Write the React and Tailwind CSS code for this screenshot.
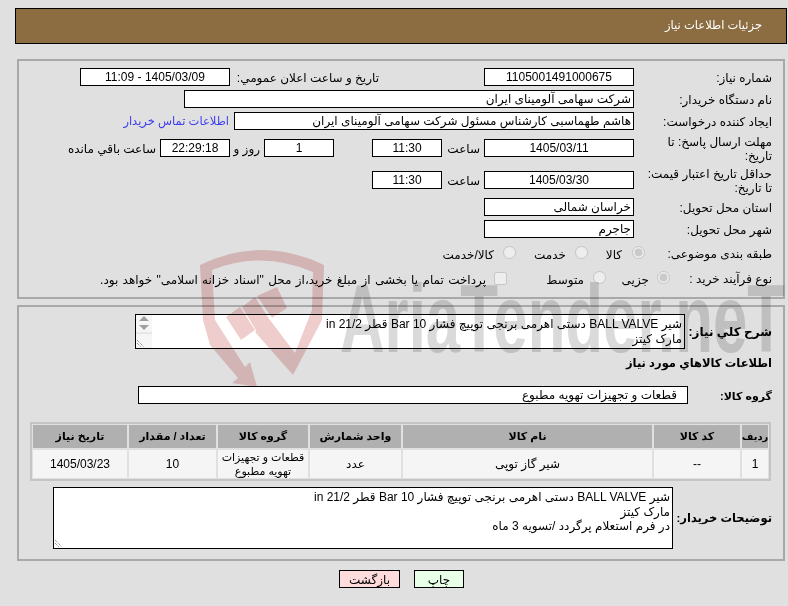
import React from "react";

const boxText = "text-[12px] text-black bg-white border border-black h-[18px] px-[2px] outline-none shrink-0";
const desc = "شیر BALL VALVE دستی اهرمی برنجی توپیچ فشار Bar 10 قطر in 21/2";

function Field({ value, width, center, className = "" }) {
  return (
    <input
      readOnly
      dir="rtl"
      value={value}
      style={{ width }}
      className={`${boxText} ${center ? "text-center" : "text-right"} ${className}`}
    />
  );
}

function Label({ children }) {
  return <div className="w-[133px] shrink-0 pt-[2px] leading-[14.5px] text-[12px] text-black">{children}</div>;
}

function Radio({ checked, name }) {
  return <input type="radio" name={name} disabled defaultChecked={checked} className="w-[13px] h-[13px] m-0 shrink-0 relative -top-[1px]" />;
}

function Watermark() {
  return (
    <svg className="absolute inset-0 pointer-events-none mix-blend-multiply [direction:ltr]" width="788" height="606" viewBox="0 0 788 606">
      <g fill="#f0cdcd">
        <path d="M200 265 Q262 235 324 265 L322 320 L293 375 L255 332 L270 320 L295 353 L312 310 L313 272 Q262 250 212 270 L215 320 L245 367 L250 362 L257 387 L232 383 L238 378 L210 345 L203 320 Z" />
        <path d="M226 317 L240 307 L255 330 L241 340 Z" />
        <path d="M242 307 L255 297 L271 322 L257 332 Z" />
        <path d="M257 296 L277 287 L287 308 L272 318 Z" />
      </g>
      <text x="340" y="352" direction="ltr" fontSize="96" fontWeight="700" fill="#dadada" textLength="445" lengthAdjust="spacingAndGlyphs" fontFamily="Liberation Sans, sans-serif">
        AriaTender.neT
      </text>
    </svg>
  );
}

const columns = [
  { title: "ردیف", value: "1", head: "text-[10px]" },
  { title: "کد کالا", value: "--" },
  { title: "نام کالا", value: "شیر گاز توپی" },
  { title: "واحد شمارش", value: "عدد" },
  { title: "گروه کالا", value: "قطعات و تجهیزات\nتهویه مطبوع", cell: "text-[11px]" },
  { title: "تعداد / مقدار", value: "10" },
  { title: "تاریخ نیاز", value: "1405/03/23" },
];

export default function App() {
  return (
    <div dir="rtl" className="relative w-full h-[606px] overflow-hidden bg-[#e0e0e0] text-[12px] text-black [font-family:'Liberation_Sans','DejaVu_Sans',sans-serif]">
      <div className="pt-[8px] pl-[15px] pr-px">
        <div className="h-[36px] bg-[#8c6d42] border border-black flex items-center pr-[24px] text-white text-[11.5px]">
          جزئیات اطلاعات نیاز
        </div>
      </div>

      <div className="mt-[15px] ml-[17px] mr-[3px] h-[240px] border-2 border-[#a8a8a8] pt-[7px] pr-[11px]">
        <div className="flex items-center h-[18px]">
          <Label>شماره نیاز:</Label>
          <Field value="1105001491000675" width={150} center className="mr-[5px]" />
          <div className="mr-[105px] w-[145px] pt-[2px] text-right">تاریخ و ساعت اعلان عمومي:</div>
          <Field value="1405/03/09 - 11:09" width={150} center className="mr-[4px]" />
        </div>
        <div className="flex items-center h-[18px] mt-[4px]">
          <Label>نام دستگاه خریدار:</Label>
          <Field value="شرکت سهامی آلومینای ایران" width={450} className="mr-[5px]" />
        </div>
        <div className="flex items-center h-[18px] mt-[4px]">
          <Label>ایجاد کننده درخواست:</Label>
          <Field value="هاشم طهماسبی کارشناس مسئول شرکت سهامی آلومینای ایران" width={400} className="mr-[5px]" />
          <a className="mr-[5px] pt-[2px] text-[#3c3cf0] text-[11.5px]">اطلاعات تماس خریدار</a>
        </div>
        <div className="flex items-center h-[18px] mt-[9px]">
          <Label>مهلت ارسال پاسخ: تا تاریخ:</Label>
          <Field value="1405/03/11" width={150} center className="mr-[5px]" />
          <div className="mr-[4px] w-[38px] pt-[2px]">ساعت</div>
          <Field value="11:30" width={70} center />
          <div className="w-[38px]"></div>
          <Field value="1" width={70} center />
          <div className="mr-[4px] w-[30px] pt-[2px]">روز و</div>
          <Field value="22:29:18" width={70} center className="bg-[#ffffee]" />
          <div className="mr-[4px] pt-[2px]">ساعت باقي مانده</div>
        </div>
        <div className="flex items-center h-[18px] mt-[14px]">
          <Label>حداقل تاریخ اعتبار قیمت: تا تاریخ:</Label>
          <Field value="1405/03/30" width={150} center className="mr-[5px]" />
          <div className="mr-[4px] w-[38px] pt-[2px]">ساعت</div>
          <Field value="11:30" width={70} center />
        </div>
        <div className="flex items-center h-[18px] mt-[9px]">
          <Label>استان محل تحویل:</Label>
          <Field value="خراسان شمالی" width={150} className="mr-[5px]" />
        </div>
        <div className="flex items-center h-[18px] mt-[4px]">
          <Label>شهر محل تحویل:</Label>
          <Field value="جاجرم" width={150} className="mr-[5px]" />
        </div>
        <div className="flex items-center h-[18px] mt-[6px]">
          <div className="w-[127px] shrink-0 pt-[2px]">طبقه بندی موضوعی:</div>
          <Radio name="cat" checked />
          <span className="mr-[10px] w-[16px] pt-[3px]">کالا</span>
          <span className="w-[18px]"></span>
          <Radio name="cat" />
          <span className="mr-[9px] w-[32px] pt-[3px]">خدمت</span>
          <span className="w-[18px]"></span>
          <Radio name="cat" />
          <span className="mr-[9px] pt-[3px]">کالا/خدمت</span>
        </div>
        <div className="flex items-center h-[18px] mt-[7px]">
          <div className="w-[102px] shrink-0 pt-[2px]">نوع فرآیند خرید :</div>
          <Radio name="proc" checked />
          <span className="mr-[8px] w-[28px] pt-[4px]">جزیی</span>
          <span className="w-[15px]"></span>
          <Radio name="proc" />
          <span className="mr-[9px] w-[36px] pt-[4px]">متوسط</span>
          <span className="w-[41px]"></span>
          <input type="checkbox" disabled className="w-[13px] h-[13px] m-0 shrink-0" />
          <span className="mr-[8px] pt-[4px] whitespace-nowrap [word-spacing:1px]">پرداخت تمام یا بخشی از مبلغ خرید،از محل "اسناد خزانه اسلامی" خواهد بود.</span>
        </div>
      </div>

      <div className="mt-[6px] ml-[17px] mr-[3px] h-[256px] border-2 border-[#a8a8a8] pt-[7px] pr-[11px]">
        <div className="flex items-center">
          <div className="w-[87px] shrink-0 font-bold">شرح کلي نیاز:</div>
          <div className="relative w-[550px] h-[35px] shrink-0">
            <textarea readOnly value={desc + "\nمارک کیتز"} className="w-full h-full resize-none overflow-hidden bg-white border border-black px-[2px] py-[2px] text-[12px] leading-[14.5px] outline-none" />
            <svg className="absolute left-px bottom-px" width="16" height="33" viewBox="0 0 16 33">
              <rect width="16" height="33" fill="#f6f6f6" />
              <path d="M3 6 L8 1 L13 6 Z M3 10 L13 10 L8 15 Z" fill="#a0a0a0" />
              <path d="M0 18 H16" stroke="#d8d8d8" />
              <path d="M1 25 L8 32 M1 28 L5 32" stroke="#707070" strokeDasharray="1 1" />
            </svg>
          </div>
        </div>
        <div className="font-bold text-[11.5px] mt-[7px] h-[15px] leading-[15px]">اطلاعات کالاهاي مورد نیاز</div>
        <div className="flex items-center h-[18px] mt-[15px] relative z-10">
          <div className="w-[84px] shrink-0 pt-[2px] font-bold text-[11px]">گروه کالا:</div>
          <input readOnly dir="rtl" value="قطعات و تجهیزات تهویه مطبوع" className={`${boxText} w-[550px] text-right pr-[10px]`} />
        </div>
        <div className="mt-[18px] w-[741px] mr-px">
          <div className="grid grid-cols-[26px_86px_249px_91px_90px_87px_94px] grid-rows-[23px_28px] gap-[2px] border-2 border-[#c4c4c4] p-px">
            {columns.map((c) => (
              <div key={c.title} className={`bg-[#b0b0b0] font-bold flex items-center justify-center text-center ${c.head || "text-[11px]"}`}>
                {c.title}
              </div>
            ))}
            {columns.map((c) => (
              <div key={c.title} className={`bg-[#f5f5f5] flex items-center justify-center text-center leading-[14px] whitespace-pre ${c.cell || ""}`}>
                {c.value}
              </div>
            ))}
          </div>
        </div>
        <div className="flex items-center mt-[6px]">
          <div className="w-[99px] shrink-0 pt-[2px] font-bold text-[11.5px] whitespace-nowrap">توضیحات خریدار:</div>
          <div className="relative w-[620px] h-[62px] shrink-0">
            <textarea readOnly value={desc + "\nمارک کیتز\nدر فرم استعلام پرگردد /تسویه 3 ماه"} className="w-full h-full resize-none overflow-hidden bg-white border border-black px-[2px] py-[2px] text-[12px] leading-[14.5px] outline-none" />
            <svg className="absolute left-[2px] bottom-[2px]" width="9" height="9" viewBox="0 0 9 9">
              <path d="M0 2 L7 9 M0 5 L4 9" stroke="#707070" strokeDasharray="1 1" />
            </svg>
          </div>
        </div>
      </div>

      <div className="flex justify-center gap-[14px] mt-[9px] pl-[15px]">
        <button className="w-[50px] h-[18px] bg-[#e8ffe8] border border-black text-[12px]">چاپ</button>
        <button className="w-[61px] h-[18px] bg-[#ffdcdc] border border-black text-[12px]">بازگشت</button>
      </div>

      <Watermark />
    </div>
  );
}
